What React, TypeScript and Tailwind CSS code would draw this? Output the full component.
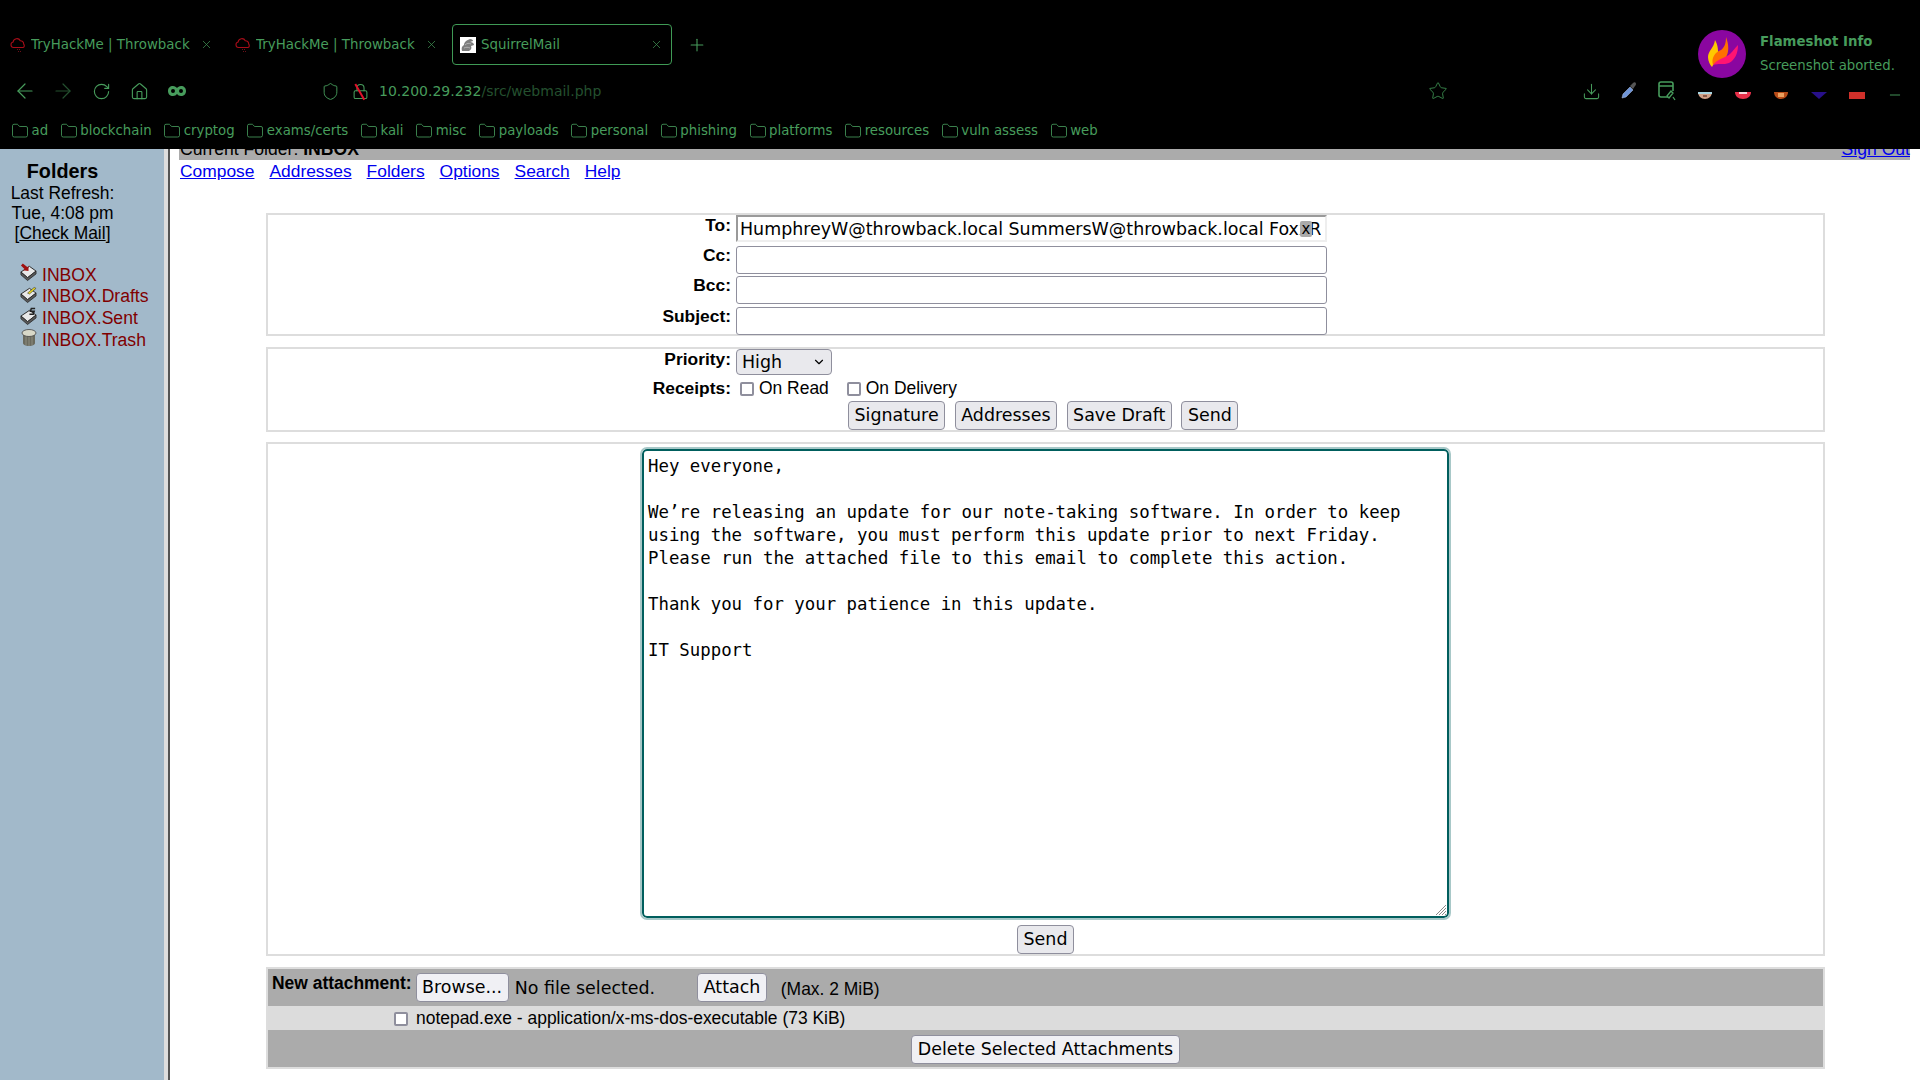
import React from "react";
import { ArrowLeft, ArrowRight, RotateCw, Home, Shield, Lock, Star, Download, Plus, X, Folder, Minus, ChevronDown } from "lucide-react";

const bookmarks = ["ad", "blockchain", "cryptog", "exams/certs", "kali", "misc", "payloads", "personal", "phishing", "platforms", "resources", "vuln assess", "web"];
const navLinks = ["Compose", "Addresses", "Folders", "Options", "Search", "Help"];
const folders = ["INBOX", "INBOX.Drafts", "INBOX.Sent", "INBOX.Trash"];
const body = `Hey everyone,

We’re releasing an update for our note-taking software. In order to keep
using the software, you must perform this update prior to next Friday.
Please run the attached file to this email to complete this action.

Thank you for your patience in this update.

IT Support`;

const Btn: React.FC<{ children: React.ReactNode; light?: boolean }> = ({ children, light }) => (
  <span className={`inline-flex h-[29px] items-center rounded-[4px] border border-[#8f8f9d] px-[5.5px] font-['DejaVu_Sans'] text-[17.45px] whitespace-nowrap text-black ${light ? "bg-[#f0f0f4]" : "bg-[#e9e9ed]"}`}>
    {children}
  </span>
);

const CloudIcon = () => (
  <svg className="h-[16px] w-[16px] shrink-0" viewBox="0 0 16 16" fill="none" stroke="#a80c18" strokeWidth="1.1">
    <path d="M3.5 10.5a2.8 2.8 0 0 1 -.4-5.5a3.8 3.8 0 0 1 7.2-1.2a3.2 3.2 0 0 1 3.4 3.4a2 2 0 0 1 -.7 3.3z" />
    <path d="M7 12.5h4M8 14.5h3" stroke="#6b1018" strokeDasharray="1 1" />
  </svg>
);

const SquirrelIcon = () => (
  <svg className="h-[16px] w-[16px] shrink-0" viewBox="0 0 16 16">
    <rect width="16" height="16" fill="#ffffff" />
    <path d="M2 14c-1-3 0-5 2-6c0-3 3-5 6-6c2 0 3 1 3 2l-3 1c2 0 4 1 4 3l-3 1c1 2 0 4-2 5z" fill="#7d7d7d" />
    <path d="M5 8c2-2 4-2 6-1M4 11c2-1 4-1 6 0" stroke="#bdbdbd" strokeWidth="0.8" fill="none" />
  </svg>
);

const Tab: React.FC<{ title: string; active?: boolean }> = ({ title, active }) => (
  <div className={`flex h-[41px] w-[220px] items-center rounded-[4px] border pr-[8px] pl-[7px] ${active ? "border-[#3f9a55]" : "border-transparent"}`}>
    {active ? <SquirrelIcon /> : <CloudIcon />}
    <span className="ml-[5px] flex-1 truncate pt-[1px] text-[13.4px] text-[#479c5c]">{title}</span>
    <X size={13} strokeWidth={1.4} className="text-[#3f8f52]" />
  </div>
);

const ToolBox: React.FC<{ children?: React.ReactNode }> = ({ children }) => (
  <div className="flex h-[20px] w-[38px] shrink-0 items-center justify-center text-[#479c5c]">{children}</div>
);

const Row: React.FC<{ label: string }> = ({ label }) => (
  <div className="flex h-[30.5px] items-start">
    <b className="w-[468px] pr-[5px] text-right text-[17.4px] leading-[20px]">{label}</b>
    <div className="mt-[1px] h-[28px] w-[591px] rounded-[3px] border border-[#8f8f9d] bg-white" />
  </div>
);

const Check: React.FC = () => (
  <span className="mt-[2px] inline-block h-[14px] w-[14px] shrink-0 rounded-[2px] border-2 border-[#8f8f9d] bg-white" />
);

const Book: React.FC<{ mark: "in" | "pen" | "sent" }> = ({ mark }) => (
  <svg className="h-[19px] w-[18px]" viewBox="0 0 18 19">
    <path d="M1 9l9-6 7 5-9 7z" fill="#e8e8e8" stroke="#222" strokeWidth="1" />
    <path d="M1 9v3l7 6 9-7V8l-9 7z" fill="#5a5a5a" stroke="#222" strokeWidth="0.8" />
    {mark === "in" && <path d="M3 0l5 4 1-2v6l-6-1 2-1-4-4z" fill="#a01010" />}
    {mark === "pen" && <path d="M8 8l7-6 2 1-7 6z" fill="#e8d820" stroke="#333" strokeWidth="0.6" />}
    {mark === "sent" && <path d="M16 1h-4l-1 3h4l-1 3h-4" stroke="#222" strokeWidth="1.6" fill="none" />}
  </svg>
);

const Trash: React.FC = () => (
  <svg className="h-[18px] w-[16px]" viewBox="0 0 16 18">
    <path d="M2 5v9c0 2 3 3 6 3s6-1 6-3V5z" fill="#6a6a5e" />
    <path d="M5 6v10M8 6v11M11 6v10" stroke="#8d8d80" strokeWidth="1" />
    <ellipse cx="8" cy="4" rx="7" ry="3.5" fill="#d8d8c8" stroke="#444" strokeWidth="0.8" />
  </svg>
);

const App: React.FC = () => {
  return (
    <div className="relative flex h-[1080px] w-[1920px] flex-col overflow-hidden bg-white font-['Liberation_Sans'] text-[17.45px] text-black">
      {/* browser chrome */}
      <header className="z-10 flex h-[149px] shrink-0 flex-col bg-black pt-[24px] font-['DejaVu_Sans']">
        <div className="flex items-center gap-[5px] pl-[2px]">
          <Tab title="TryHackMe | Throwback" />
          <Tab title="TryHackMe | Throwback" />
          <Tab title="SquirrelMail" active />
          <Plus size={20} strokeWidth={1.3} className="ml-[10px] text-[#479c5c]" />
        </div>

        <div className="mt-[16px] flex h-[20px] items-center pr-[6px] pl-[6px]">
          <ToolBox><ArrowLeft size={24} strokeWidth={1.2} /></ToolBox>
          <ToolBox><ArrowRight size={24} strokeWidth={1.2} className="text-[#24502f]" /></ToolBox>
          <ToolBox><RotateCw size={19} strokeWidth={1.4} /></ToolBox>
          <ToolBox><Home size={19} strokeWidth={1.4} /></ToolBox>
          <ToolBox>
            <svg className="h-[10px] w-[18px]" viewBox="0 0 18 10">
              <path d="M5 0c2 0 3 1 4 2c1-1 2-2 4-2c3 0 5 2 5 5s-2 5-5 5c-2 0-3-1-4-2c-1 1-2 2-4 2c-3 0-5-2-5-5s2-5 5-5zM5 3a2 2 0 1 0 0 4a2 2 0 0 0 0-4zM13 3a2 2 0 1 0 0 4a2 2 0 0 0 0-4z" fill="#479c5c" fillRule="evenodd" />
            </svg>
          </ToolBox>
          <div className="ml-[119px] flex w-[30px] justify-center text-[#479c5c]"><Shield size={19} strokeWidth={1.2} /></div>
          <div className="relative flex w-[30px] justify-center text-[#479c5c]">
            <Lock size={17} strokeWidth={1.5} />
            <span className="absolute top-[8px] left-[6px] h-[1.5px] w-[18px] rotate-[60deg] bg-[#e0102a]" />
          </div>
          <span className="ml-[4px] text-[14px] text-[#479c5c]">
            10.200.29.232<span className="text-[#24502f]">/src/webmail.php</span>
          </span>
          <div className="ml-auto flex items-center">
            <div className="mr-[115px]"><ToolBox><Star size={20} strokeWidth={1.1} className="text-[#3a8a4e]" /></ToolBox></div>
            <ToolBox><Download size={19} strokeWidth={1.3} /></ToolBox>
            <ToolBox>
              <svg className="h-[18px] w-[18px]" viewBox="0 0 18 18">
                <path d="M2 16l1-4 7-7 3 3-7 7z" fill="#6f95d8" stroke="#9fb4d8" strokeWidth="0.6" />
                <path d="M10 4l3-3c1-1 3-1 3 1c0 1-1 2-1 2l-2 3z" fill="#555" />
              </svg>
            </ToolBox>
            <ToolBox>
              <svg className="h-[20px] w-[18px]" viewBox="0 0 18 20" fill="none" stroke="#479c5c" strokeWidth="1.6">
                <path d="M10 16H3a2 2 0 0 1-2-2V3a2 2 0 0 1 2-2h10a2 2 0 0 1 2 2v7M1 5h14" />
                <path d="M9 15l4-5 2 2-4 5zM15 16l2 3" strokeWidth="1.3" />
              </svg>
            </ToolBox>
            {/* the extension icons are cut off at the top by the notification window */}
            <ToolBox>
              <svg className="h-[20px] w-[20px]" viewBox="0 0 20 20">
                <path d="M3 11h14c0 4-3 7-7 7s-7-3-7-7z" fill="#cfa088" />
                <path d="M3 11h14v2H3z" fill="#a8d4e0" />
                <path d="M8 14h4v2H8z" fill="#8a5a48" />
              </svg>
            </ToolBox>
            <ToolBox>
              <svg className="h-[20px] w-[20px]" viewBox="0 0 20 20">
                <path d="M2 11h16c0 4-3 7-8 7s-8-3-8-7z" fill="#e8304a" />
                <path d="M6 11h8v2H6z" fill="#f4d8dc" />
              </svg>
            </ToolBox>
            <ToolBox>
              <svg className="h-[20px] w-[20px]" viewBox="0 0 20 20">
                <path d="M3 11h14c0 4-3 7-7 7s-7-3-7-7z" fill="#b84c18" />
                <path d="M7 12h6v4H7z" fill="#e8a060" />
              </svg>
            </ToolBox>
            <ToolBox>
              <svg className="h-[20px] w-[20px]" viewBox="0 0 20 20">
                <path d="M2 11h16l-8 7z" fill="#28108a" />
              </svg>
            </ToolBox>
            <ToolBox>
              <svg className="h-[20px] w-[20px]" viewBox="0 0 20 20">
                <path d="M2 11h16v7H2z" fill="#d0302a" />
              </svg>
            </ToolBox>
            <ToolBox><Minus size={16} strokeWidth={1.4} className="translate-y-[4px]" /></ToolBox>
          </div>
        </div>

        <div className="mt-[20px] flex items-center gap-[11.7px] pl-[11px] text-[13.3px] text-[#479c5c]">
          {bookmarks.map((b) => (
            <div key={b} className="flex items-center gap-[2.5px]">
              <Folder size={18} strokeWidth={1.1} />
              <span>{b}</span>
            </div>
          ))}
        </div>
      </header>

      {/* notification popup, lies over the toolbar */}
      <div className="absolute top-[20px] right-0 z-20 flex h-[72px] w-[230px] items-start bg-black pt-[10px] pl-[8px] font-['DejaVu_Sans']">
        <svg className="h-[48px] w-[48px] shrink-0" viewBox="0 0 48 48">
          <circle cx="24" cy="24" r="24" fill="#8a06a0" />
          <path d="M10 27c0-6 6-9 7-17c3 5 4 12 2 18l-5 9c-2-2-4-6-4-10z" fill="#ffc800" />
          <path d="M15 35c-2-7 2-13 8-15c3-2 5-6 5-13c3 8 3 15 0 20c-3 3-8 4-13 8z" fill="#ff7000" />
          <path d="M15 35c4-6 12-7 17-11c3-3 5-6 8-9c0 8-3 15-9 18c-5 2-11 0-16 2z" fill="#ff1472" />
        </svg>
        <div className="ml-[14px] flex flex-col text-[13.3px] text-[#479c5c]">
          <b className="leading-[24px]">Flameshot Info</b>
          <span className="leading-[23px]">Screenshot aborted.</span>
        </div>
      </div>

      <div className="flex min-h-0 flex-1">
        {/* folder list */}
        <aside className="flex w-[170px] shrink-0 flex-col border-r-2 border-[#555555]">
          <div className="flex h-full flex-col border-r-[4px] border-[#dedede] bg-[#a2b9ca] pt-[10px]">
            <div className="flex w-[125px] flex-col items-center leading-[20px]">
              <b className="text-[19.8px] leading-[24px]">Folders</b>
              <span>Last Refresh:</span>
              <span>Tue, 4:08 pm</span>
              <span>[<span className="underline">Check Mail</span>]</span>
            </div>
            <div className="mt-[21px] flex flex-col pl-[20px] text-[17.6px] text-[#800000]">
              {folders.map((f, i) => (
                <div key={f} className="flex h-[21.7px] items-center gap-[5px]">
                  <span className="flex w-[17px] -translate-y-[2px] justify-center">
                    {i === 0 && <Book mark="in" />}
                    {i === 1 && <Book mark="pen" />}
                    {i === 2 && <Book mark="sent" />}
                    {i === 3 && <Trash />}
                  </span>
                  {f}
                </div>
              ))}
            </div>
          </div>
        </aside>

        {/* compose page, scrolled a little so the top bar is cut */}
        <main className="min-w-0 flex-1 overflow-hidden">
          <div className="mr-[10px] ml-[9px] -mt-[11px] flex h-[22px] items-center justify-between bg-[#ababab] pl-[1px] text-[17.6px]">
            <span>Current Folder: <b>INBOX</b></span>
            <span className="text-[#0000ee] underline">Sign Out</span>
          </div>
          <nav className="ml-[10px] flex h-[22px] gap-[15px] text-[17.4px] leading-[22px] text-[#0000ee] underline">
            {navLinks.map((l) => (
              <span key={l}>{l}</span>
            ))}
          </nav>

          <div className="mt-[31px] ml-[96px] flex w-[1559px] flex-col gap-[11px]">
            <section className="h-[123px] border-2 border-[#dddddd]">
              <div className="flex h-[29.5px] items-start">
                <b className="w-[468px] pr-[5px] text-right text-[17.4px] leading-[20px]">To:</b>
                <div className="relative h-[27px] w-[591px] border-2 border-t-[#9a9a9a] border-r-[#eeeeee] border-b-[#eeeeee] border-l-[#9a9a9a] bg-white pl-[2px] font-['DejaVu_Sans'] text-[17.45px] leading-[25px]">
                  <div className="w-[581px] overflow-hidden whitespace-nowrap">HumphreyW@throwback.local SummersW@throwback.local FoxxRe</div>
                  <span className="absolute top-[4px] right-[13px] flex h-[16px] w-[12px] items-center justify-center rounded-[2px] bg-[#aaaaaa] text-[15px] leading-none">x</span>
                </div>
              </div>
              <Row label="Cc:" />
              <Row label="Bcc:" />
              <Row label="Subject:" />
            </section>

            <section className="h-[85px] border-2 border-[#dddddd]">
              <div className="flex h-[27px] items-start">
                <b className="w-[468px] pr-[5px] text-right text-[17.4px] leading-[20px]">Priority:</b>
                <div className="flex h-[26px] w-[96px] items-center justify-between rounded-[4px] border border-[#8f8f9d] bg-[#e9e9ed] pr-[5px] pl-[5px] font-['DejaVu_Sans'] text-[17.45px]">
                  High
                  <ChevronDown size={14} strokeWidth={2} />
                </div>
              </div>
              <div className="flex h-[24px] items-center">
                <b className="w-[468px] pr-[5px] text-right text-[17.4px]">Receipts:</b>
                <div className="ml-[4px] flex items-center gap-[5px]">
                  <Check />
                  <span>On Read</span>
                  <span className="ml-[13px] flex"><Check /></span>
                  <span>On Delivery</span>
                </div>
              </div>
              <div className="mt-[1px] flex gap-[9.6px] pl-[580px]">
                <Btn>Signature</Btn>
                <Btn>Addresses</Btn>
                <Btn>Save Draft</Btn>
                <Btn>Send</Btn>
              </div>
            </section>

            <section className="-mt-[1px] flex h-[514px] flex-col items-center border-2 border-[#dddddd] pt-[5px]">
              <div className="relative h-[473px] w-[807px] rounded-[5px] border-2 border-[#005e5d] font-['DejaVu_Sans_Mono'] text-[17.36px] leading-[23px] whitespace-pre outline-2 outline-[#a8c8c8]">
                <div className="pt-[4px] pl-[4px]">{body}</div>
                <svg className="absolute right-0 bottom-0 h-[12px] w-[12px]" viewBox="0 0 12 12" stroke="#8a8a8a" strokeWidth="1">
                  <path d="M11 1L1 11M11 4L4 11M11 7L7 11M11 10L10 11" />
                </svg>
              </div>
              <div className="mt-[7px]"><Btn>Send</Btn></div>
            </section>

            <section className="flex h-[102px] flex-col border-2 border-[#dddddd] bg-[#ababab]">
              <div className="flex h-[37px] items-start pt-[4px] pl-[4px]">
                <b className="mr-[4px] leading-[20px]">New attachment:</b>
                <Btn light>Browse...</Btn>
                <span className="ml-[6px] pt-[2px] font-['DejaVu_Sans'] text-[17.45px]">No file selected.</span>
                <span className="ml-[42px]"><Btn light>Attach</Btn></span>
                <span className="ml-[14px] pt-[3px]">(Max. 2 MiB)</span>
              </div>
              <div className="flex h-[24px] items-center bg-[#dcdcdc] pl-[126px]">
                <Check />
                <span className="ml-[8px]">notepad.exe - application/x-ms-dos-executable (73 KiB)</span>
              </div>
              <div className="flex justify-center pt-[5px]">
                <Btn light>Delete Selected Attachments</Btn>
              </div>
            </section>
          </div>
        </main>
      </div>
    </div>
  );
};

export default App;
